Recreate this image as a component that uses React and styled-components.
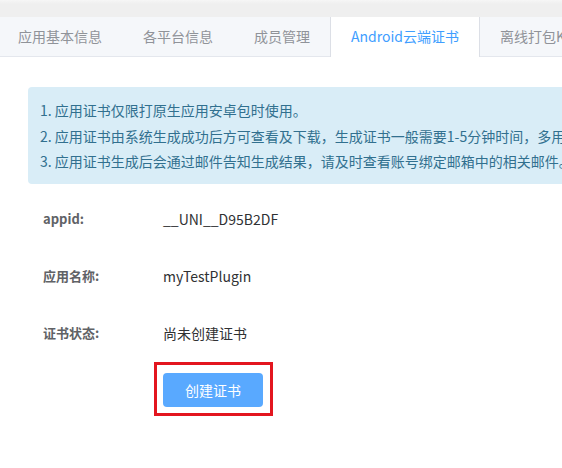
import React from "react";
import styled, { createGlobalStyle } from "styled-components";

const Global = createGlobalStyle`
  html, body { margin: 0; padding: 0; overflow: hidden; background: #fff; }
  body { font-family: "Open Sans", "Noto Sans CJK SC", sans-serif; }
  * { box-sizing: border-box; }
`;

const Page = styled.div`
  width: 562px;
  height: 468px;
  overflow: hidden;
  background: #fff;
`;

const TopBand = styled.div`
  height: 17px;
  background: linear-gradient(#f6f6f6, #efefef 4px, #efefef);
`;

const TabBar = styled.div`
  display: flex;
  height: 40px;
  background: #f5f7fa;
  border-bottom: 1px solid #e4e7ed;
  white-space: nowrap;
  padding-left: 0;
`;

const Tab = styled.div`
  flex: none;
  height: 40px;
  line-height: 39px;
  padding: 0 20px;
  margin-left: -1px;
  font-size: 14px;
  font-family: "Noto Sans CJK SC", sans-serif;
  color: ${(p) => (p.$active ? "#409eff" : "#909399")};
  background: ${(p) => (p.$active ? "#fff" : "transparent")};
  border-left: 1px solid ${(p) => (p.$active ? "#dcdfe6" : "transparent")};
  border-right: 1px solid ${(p) => (p.$active ? "#dcdfe6" : "transparent")};
  &:first-child { margin-left: -3px; }
`;

const Content = styled.div`
  padding: 30px 0 0 28px;
`;

const Alert = styled.div`
  width: 620px;
  background: #d9edf7;
  color: #31708f;
  border-radius: 4px;
  padding: 11px 12px 9px;
  font-size: 14px;
  line-height: 25.5px;
  white-space: nowrap;
  font-family: "Noto Sans CJK SC", sans-serif;
`;

const Form = styled.div`
  display: flex;
  flex-direction: column;
  gap: 17px;
  margin-top: 15px;
  padding-left: 15px;
`;

const Row = styled.div`
  display: flex;
  align-items: center;
  height: 40px;
`;

const Label = styled.div`
  width: 120px;
  font-size: 13px;
  font-weight: 700;
  color: #606266;
  font-family: "Noto Sans CJK SC", sans-serif;
`;

const Value = styled.div`
  font-size: 14px;
  color: #303133;
  font-family: "Noto Sans CJK SC", sans-serif;
`;

const Highlight = styled.div`
  align-self: flex-start;
  margin-left: 111px;
  margin-top: -8px;
  border: 3px solid #e3161f;
  padding: 8px 7px 6px 6px;
`;

const Button = styled.button`
  display: block;
  width: 100px;
  height: 34px;
  border: none;
  border-radius: 4px;
  background: #59a9ff;
  color: #fff;
  font-size: 14px;
  font-family: "Noto Sans CJK SC", sans-serif;
  padding: 0;
  cursor: pointer;
`;

const tabs = ["应用基本信息", "各平台信息", "成员管理", "Android云端证书", "离线打包Key管理"];
const notes = [
  "1. 应用证书仅限打原生应用安卓包时使用。",
  "2. 应用证书由系统生成成功后方可查看及下载，生成证书一般需要1-5分钟时间，多用户同时生成时需排队。",
  "3. 应用证书生成后会通过邮件告知生成结果，请及时查看账号绑定邮箱中的相关邮件。",
];
const rows = [
  ["appid:", "__UNI__D95B2DF"],
  ["应用名称:", "myTestPlugin"],
  ["证书状态:", "尚未创建证书"],
];

export default function App() {
  return (
    <Page>
      <Global />
      <TopBand />
      <TabBar>
        {tabs.map((t, i) => (
          <Tab key={t} $active={i === 3}>{t}</Tab>
        ))}
      </TabBar>
      <Content>
        <Alert>
          {notes.map((n) => (
            <div key={n}>{n}</div>
          ))}
        </Alert>
        <Form>
          {rows.map(([l, v]) => (
            <Row key={l}>
              <Label>{l}</Label>
              <Value>{v}</Value>
            </Row>
          ))}
          <Highlight>
            <Button>创建证书</Button>
          </Highlight>
        </Form>
      </Content>
    </Page>
  );
}
